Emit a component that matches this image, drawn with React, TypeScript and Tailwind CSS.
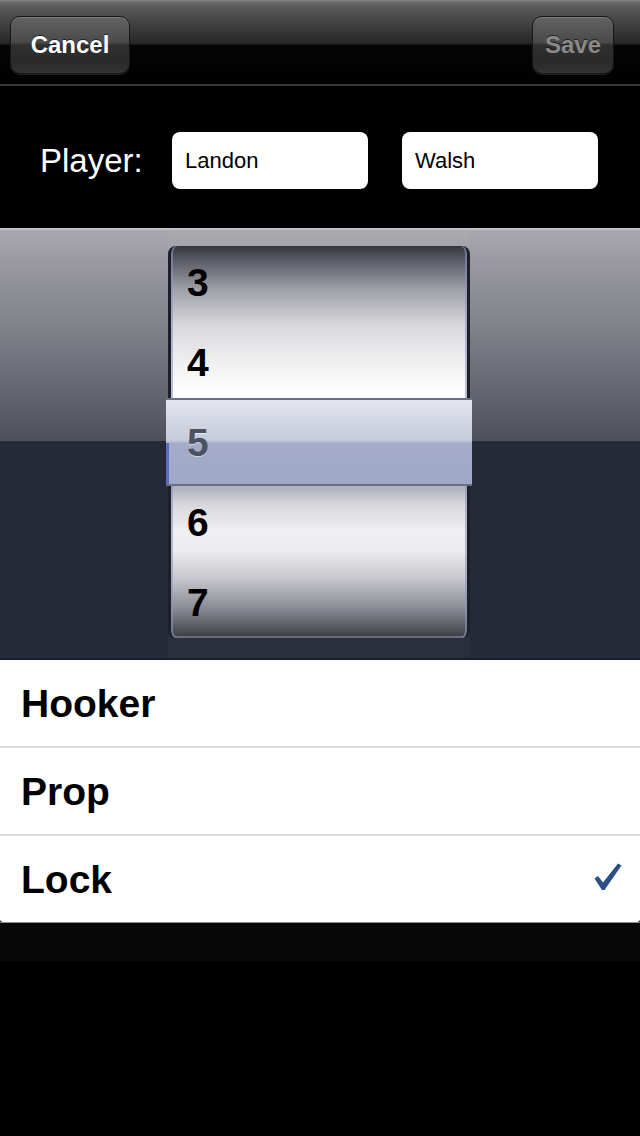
import React from "react";

const font = { fontFamily: '"Liberation Sans", Arial, Helvetica, sans-serif' };

function NavButton({ label, dim, className }: { label: string; dim?: boolean; className: string }) {
  return (
    <div
      className={`flex items-center justify-center rounded-[10px] border border-[#161616] h-[58px] ${className}`}
      style={{
        background:
          "linear-gradient(to bottom, #626262 0%, #4a4a4a 45%, #303030 50%, #2a2a2a 80%, #333333 100%)",
        boxShadow: "inset 0 1px 0 rgba(255,255,255,0.18), 0 1px 0 rgba(255,255,255,0.12)",
      }}
    >
      <span
        className={`text-[24px] font-bold leading-none ${dim ? "text-[#8a8a8a]" : "text-white"}`}
        style={{ textShadow: "0 -1px 0 rgba(0,0,0,0.6)" }}
      >
        {label}
      </span>
    </div>
  );
}

function Check() {
  return (
    <svg width="28" height="28" viewBox="0 0 28 28" className="mr-[18px] mt-[-4px]">
      <path d="M0.5 15.5 L4 13 L9 19.5 L24 0.5 L27.5 2.5 L10.5 27 L8 27 Z" fill="#2c4e86" />
    </svg>
  );
}

export default function App() {
  const rows = ["3", "4", "5", "6", "7"];
  return (
    <div className="w-[640px] h-[1136px] bg-black overflow-hidden flex flex-col" style={font}>
      {/* Nav bar */}
      <div
        className="h-[86px] shrink-0 flex items-center justify-between px-[10px] pt-[6px] border-b-2 border-[#383838]"
        style={{
          background:
            "linear-gradient(to bottom, #8a8a8a 0px, #6a6a6a 2px, #555555 10px, #383838 30px, #262626 44px, #050505 45px, #000000 86px)",
        }}
      >
        <NavButton label="Cancel" className="w-[120px]" />
        <NavButton label="Save" dim className="w-[82px] mr-[16px]" />
      </div>

      {/* Player row */}
      <div className="h-[142px] shrink-0 flex items-center pl-[40px] pt-[6px]">
        <div className="w-[132px] text-white text-[33px] leading-none">Player:</div>
        <div className="w-[196px] h-[57px] bg-white rounded-[8px] flex items-center pl-[13px] text-[22px] text-black">
          Landon
        </div>
        <div className="w-[196px] h-[57px] bg-white rounded-[8px] flex items-center pl-[13px] text-[22px] text-black ml-[34px]">
          Walsh
        </div>
      </div>

      {/* Picker */}
      <div
        className="relative h-[432px] shrink-0 border-t-2 border-[#c2c2c6] flex pl-[168px] pt-[16px]"
        style={{
          background:
            "linear-gradient(to bottom, #a8a8ae 0px, #9a9aa0 30px, #83848c 90px, #686a74 150px, #4e505c 211px, #262a38 211px, #262a38 100%)",
        }}
      >
        {/* column band */}
        <div className="absolute top-0 bottom-0 left-[168px] w-[302px] bg-white/[0.025]" />
        <div className="relative w-[302px] h-[392px]">
          <div
            className="absolute inset-0 rounded-[8px] border-x-[3px] border-[#1e2029] overflow-hidden flex flex-col justify-center"
            style={{
              background:
                "linear-gradient(to bottom, #34353c 0px, #5e5f68 16px, #a2a3ab 45px, #d8d8dc 80px, #f2f2f3 120px, #ffffff 150px, #ffffff 152px, #b0b2bc 242px, #d6d6dc 258px, #f0f0f2 285px, #ececef 305px, #c2c2c8 335px, #8a8b94 362px, #55575f 382px, #3a3b44 392px)",
              boxShadow:
                "inset 2px 0 0 rgba(140,150,190,0.6), inset -2px 0 0 rgba(140,150,190,0.6), inset 0 -2px 0 rgba(150,156,180,0.5)",
            }}
          >
            {rows.map((r) => (
              <div key={r} className="h-[80px] shrink-0 flex items-center pl-[16px]">
                <span className="text-[39px] font-bold leading-none text-black">{r === "5" ? "" : r}</span>
              </div>
            ))}
          </div>
          {/* selection bar */}
          <div
            className="absolute left-[-2px] right-[-2px] top-[152px] h-[88px] border-y-2 border-[#687086] flex items-center pl-[21px]"
            style={{
              background:
                "linear-gradient(to bottom, #e4e6ee 0px, #d4d8e4 20px, #c6cbdb 40px, #b8bfd4 42px, #a4acca 43px, #a0a8c8 100%)",
            }}
          >
            <div className="absolute left-0 top-[43px] bottom-0 w-[3px] bg-[#5a6cc8]" />
            <span
              className="text-[39px] font-bold leading-none text-[#4d5262]"
              style={{ textShadow: "0 1px 0 rgba(255,255,255,0.5)" }}
            >
              5
            </span>
          </div>
        </div>
        <div className="absolute bottom-0 left-0 right-0 h-[2px] bg-[#1a1c26]" />
      </div>

      {/* Table */}
      <div className="shrink-0 bg-white rounded-b-[3px]">
        <div className="h-[88px] border-b-2 border-[#dcdcdc] flex items-center pl-[21px]">
          <span className="text-[39px] font-bold text-black leading-none">Hooker</span>
        </div>
        <div className="h-[88px] border-b-2 border-[#dcdcdc] flex items-center pl-[21px]">
          <span className="text-[39px] font-bold text-black leading-none">Prop</span>
        </div>
        <div className="h-[86px] flex items-center justify-between pl-[21px]">
          <span className="text-[39px] font-bold text-black leading-none">Lock</span>
          <Check />
        </div>
      </div>

      {/* Bottom */}
      <div className="h-[1px] shrink-0 bg-[#8a8a8a]" />
      <div className="h-[38px] shrink-0 bg-[#080808]" />
      <div className="flex-1 bg-black" />
    </div>
  );
}
